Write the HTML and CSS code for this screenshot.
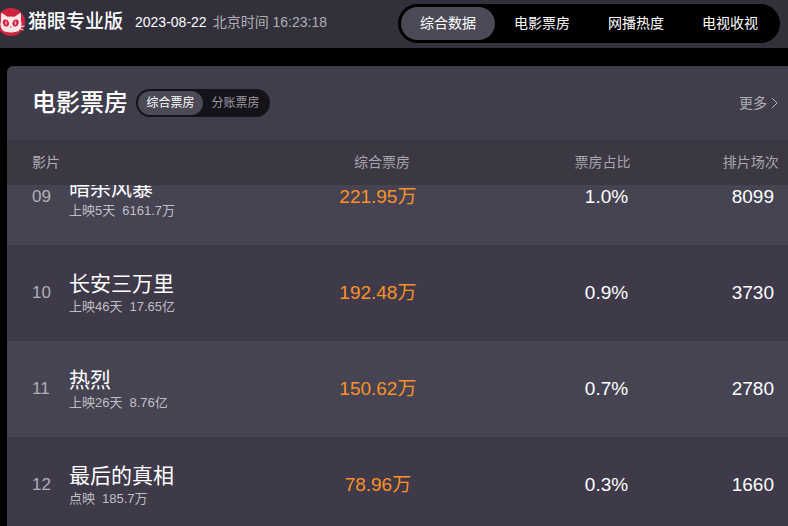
FILE: index.html
```html
<!DOCTYPE html>
<html lang="zh-CN">
<head>
    <meta charset="UTF-8">
    <title>猫眼专业版</title>
    <link rel="stylesheet" href="styles.css">
</head>
<body>
    <header class="header">
        <a class="logo" href="#">
            <svg class="logo-icon" viewBox="0 0 28 28" aria-hidden="true">
                <circle cx="14" cy="14" r="14" fill="#cf2340"/>
                <path d="M4 13 L4 6 Q4.200 4.500 5.600 5.400 L10.500 8.800 Q14 8 17.500 8.800 L22.400 5.400 Q23.800 4.500 24 6 L24 13 Q27 24.500 14 24.500 Q1 24.500 4 13 Z" fill="#fbe6e7"/>
                <ellipse cx="8.900" cy="15" rx="3" ry="3.600" fill="#cf2340" transform="rotate(-20 8.900 15)"/>
                <ellipse cx="18.600" cy="15" rx="3" ry="3.600" fill="#cf2340" transform="rotate(20 18.600 15)"/>
                <ellipse cx="9" cy="15" rx="0.800" ry="2" fill="#f3b6bd"/>
                <ellipse cx="18.500" cy="15" rx="0.800" ry="2" fill="#f3b6bd"/>
                <path d="M12.800 18.500 H14.800 L13.800 20 Z" fill="#cf2340"/>
                <path d="M23 19 L27.500 18 M22.500 20.500 L26.500 22" stroke="#fbe6e7"/>
            </svg>
            <span class="logo-text">猫眼专业版</span>
        </a>
        <div class="time">
            <span class="date">2023-08-22</span>
            <span class="clock">北京时间 16:23:18</span>
        </div>
        <nav class="nav">
            <a class="nav-item active" href="#">综合数据</a>
            <a class="nav-item" href="#">电影票房</a>
            <a class="nav-item" href="#">网播热度</a>
            <a class="nav-item" href="#">电视收视</a>
        </nav>
    </header>

    <main class="card">
        <div class="card-head">
            <h1 class="title">电影票房</h1>
            <div class="switch">
                <button class="switch-item active" type="button">综合票房</button>
                <button class="switch-item" type="button">分账票房</button>
            </div>
            <a class="more" href="#">更多<svg class="arrow" viewBox="0 0 7 12" aria-hidden="true"><path d="M1 1 L6 6 L1 11" fill="none" stroke="currentColor"/></svg></a>
        </div>

        <div class="list" id="list">
            <table class="table">
                <colgroup>
                    <col class="col-rank">
                    <col>
                    <col class="col-box">
                    <col class="col-share">
                    <col class="col-shows">
                </colgroup>
                <thead>
                    <tr>
                        <th class="rank" colspan="2">影片</th>
                        <th>综合票房</th>
                        <th class="share">票房占比</th>
                        <th class="shows">排片场次</th>
                    </tr>
                </thead>
                <tbody>
                    <tr>
                        <td class="rank">09</td>
                        <td class="film"><p class="name">暗杀风暴</p><p class="info"><span>上映5天</span><span>6161.7万</span></p></td>
                        <td class="box">221.95万</td>
                        <td class="share">1.0%</td>
                        <td class="shows">8099</td>
                    </tr>
                    <tr>
                        <td class="rank">10</td>
                        <td class="film"><p class="name">长安三万里</p><p class="info"><span>上映46天</span><span>17.65亿</span></p></td>
                        <td class="box">192.48万</td>
                        <td class="share">0.9%</td>
                        <td class="shows">3730</td>
                    </tr>
                    <tr>
                        <td class="rank">11</td>
                        <td class="film"><p class="name">热烈</p><p class="info"><span>上映26天</span><span>8.76亿</span></p></td>
                        <td class="box">150.62万</td>
                        <td class="share">0.7%</td>
                        <td class="shows">2780</td>
                    </tr>
                    <tr>
                        <td class="rank">12</td>
                        <td class="film"><p class="name">最后的真相</p><p class="info"><span>点映</span><span>185.7万</span></p></td>
                        <td class="box">78.96万</td>
                        <td class="share">0.3%</td>
                        <td class="shows">1660</td>
                    </tr>
                </tbody>
            </table>
        </div>
    </main>
    <script src="main.js"></script>
</body>
</html>
```

FILE: styles.css
```css
*{
    padding: 0;
    margin: 0;
    box-sizing: border-box;
}
body{
    display: flex;
    flex-direction: column;
    height: 100vh;
    overflow: hidden;
    background: #000;
    color: #fff;
    font-family: "Liberation Sans", "Noto Sans CJK SC", sans-serif;
    font-size: 14px;
}
a{
    color: inherit;
    text-decoration: none;
}
.header{
    display: flex;
    align-items: center;
    flex: none;
    height: 48px;
    padding: 0 8px 4px 0;
    background: #31303b;
}
.logo{
    display: flex;
    align-items: center;
    margin-left: -3px;
}
.logo-icon{
    width: 28px;
    height: 28px;
}
.logo-text{
    margin-left: 3px;
    font-size: 19px;
    line-height: 28px;
    font-weight: 500;
}
.time{
    display: flex;
    gap: 6px;
    margin-left: 12px;
    line-height: 20px;
}
.clock{
    color: #b0afb6;
}
.nav{
    display: flex;
    margin-left: auto;
    margin-top: 2px;
    padding: 3px;
    background: #000;
    border-radius: 20px;
}
.nav-item{
    width: 94px;
    line-height: 33px;
    text-align: center;
    border-radius: 17px;
}
.nav-item.active{
    background: #4c4a56;
}

.card{
    display: flex;
    flex-direction: column;
    flex: 1;
    min-height: 0;
    margin: 18px 0 0 7px;
    background: #403e4c;
    border-top-left-radius: 6px;
    overflow: hidden;
}
.card-head{
    display: flex;
    align-items: center;
    flex: none;
    height: 74px;
    padding: 0 10px 0 25px;
}
.title{
    font-size: 24px;
    line-height: 36px;
    font-weight: 500;
}
.switch{
    display: flex;
    margin-left: 8px;
    padding: 2px;
    background: #14131a;
    border-radius: 14px;
}
.switch-item{
    width: 65px;
    height: 24px;
    border: none;
    border-radius: 12px;
    background: none;
    color: #9c9aa3;
    font-family: inherit;
    font-size: 12px;
    line-height: 20px;
}
.switch-item.active{
    background: #4c4a56;
    color: #fff;
}
.more{
    display: flex;
    align-items: center;
    gap: 4px;
    margin-left: auto;
    color: #b0afb6;
    line-height: 20px;
}
.arrow{
    width: 7px;
    height: 12px;
}

.list{
    flex: 1;
    min-height: 0;
    overflow-y: auto;
    scrollbar-width: none;
}
.table{
    width: 100%;
    table-layout: fixed;
    border-collapse: collapse;
    text-align: center;
}
.col-rank{
    width: 62px;
}
.col-box{
    width: 28%;
}
.col-share{
    width: 29%;
}
.col-shows{
    width: 9%;
}
.table th{
    position: sticky;
    top: 0;
    height: 45px;
    padding-bottom: 2px;
    background: #3b3843;
    color: #a8a6ae;
    font-weight: normal;
    line-height: 20px;
}
.table td{
    height: 96px;
    font-size: 19px;
    line-height: 26px;
}
.table tr{
    background: #3e3a49;
}
.table tbody tr:nth-child(odd){
    background: #464453;
}
.table .rank{
    padding-left: 25px;
    text-align: left;
    color: #b0afb6;
}
.table td.rank{
    font-size: 17px;
}
.table .film{
    padding-top: 2px;
    text-align: left;
}
.name{
    font-size: 21px;
    line-height: 26px;
}
.info{
    display: flex;
    gap: 7px;
    color: #c0bfc6;
    font-size: 13px;
    line-height: 20px;
}
.table .box{
    padding-right: 8px;
    color: #fc9126;
}
.table th.share{
    padding-right: 4px;
}
.table td.share{
    padding-left: 4px;
}
.table th.shows{
    padding-right: 4px;
}
```

FILE: main.js
```js
var list = document.getElementById("list");
// start part-way down the ranking
list.scrollTop = 36;
```
